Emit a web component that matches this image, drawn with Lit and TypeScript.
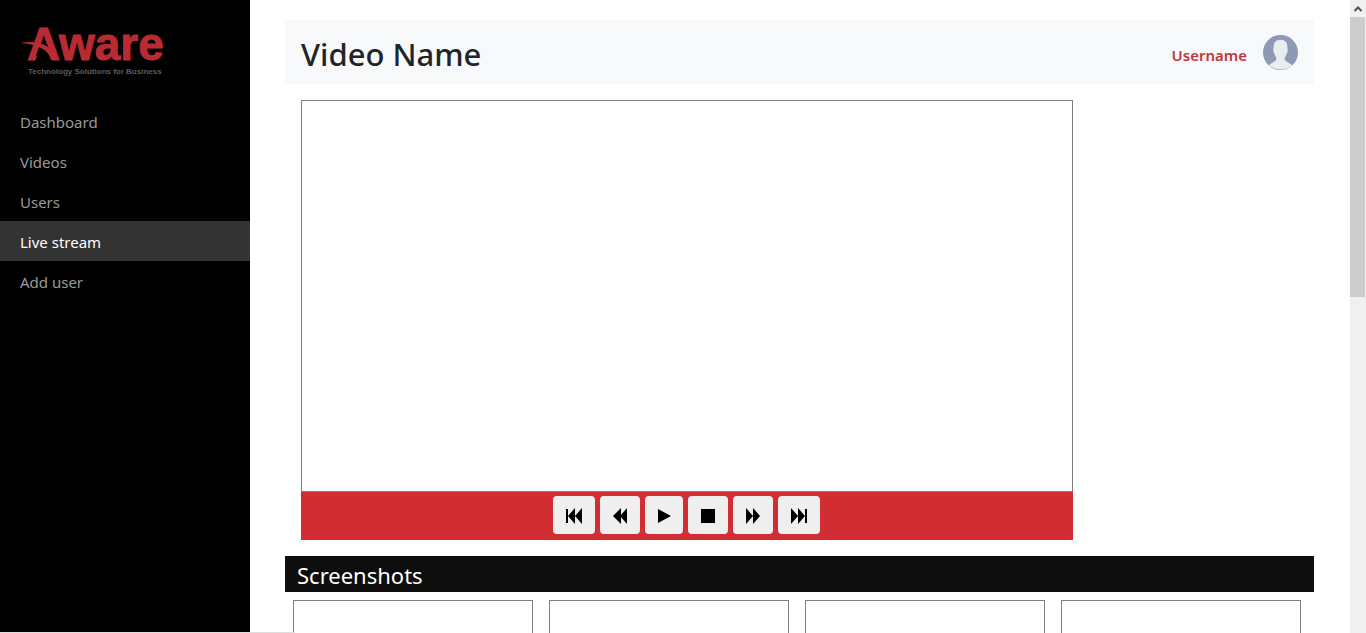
import { LitElement, html, css, svg } from "lit";
import { customElement, state } from "lit/decorators.js";
import { classMap } from "lit/directives/class-map.js";

const NAV = ["Dashboard", "Videos", "Users", "Live stream", "Add user"];

const CONTROLS = [
  { label: "Previous", size: "wide", icon: svg`<path d="M1 2h2v14H1zM3 9l7-8v16zM10 9l7-8v16z"/>` },
  { label: "Rewind", size: "mid", icon: svg`<path d="M2 9l8-8v16zM9 9l7-8v16z"/>` },
  { label: "Play", size: "slim", icon: svg`<path d="M3 2l13 7-13 7z"/>` },
  { label: "Stop", size: "mid", icon: svg`<path d="M2 2h14v14H2z"/>` },
  { label: "Fast forward", size: "mid", icon: svg`<path d="M2 1l7 8-7 8zM9 1l7 8-7 8z"/>` },
  { label: "Next", size: "wide", icon: svg`<path d="M1 1l7 8-7 8zM8 1l7 8-7 8zM15 2h2v14h-2z"/>` },
];

@customElement("side-bar")
export class SideBar extends LitElement {
  @state() private active = "Live stream";

  static styles = css`
    :host { display: block; flex: none; width: 250px; background: #000; }
    .brand { display: block; height: 101px; }
    .logo { display: block; width: 190px; height: 90px; }
    .name { font-family: "Liberation Sans", Arial, sans-serif; font-weight: 700; font-size: 46px; fill: #b92b33; stroke: #b92b33; stroke-width: 1; }
    .tag { font-family: "Liberation Sans", Arial, sans-serif; font-size: 8px; font-weight: 700; fill: #5c5c5c; }
    .item {
      display: block; box-sizing: border-box; padding: 2px 20px 0; line-height: 38px; height: 40px;
      font-size: 15px; color: #999; text-decoration: none;
    }
    .on { background: #333; color: #fff; }
  `;

  render() {
    return html`
      <a class="brand" href="#" aria-label="Aware home">
        <svg class="logo" viewBox="0 0 190 90">
          <text class="name" x="27" y="60">A</text>
          <text class="name" x="59" y="60">ware</text>
          <path d="M40 44H47L51 56H36z" fill="#000"/>
          <path d="M20 43C36 40 53 44 57 60H51C49 50 38 44 20 43z" fill="#b92b33"/>
          <text class="tag" x="28" y="74">Technology Solutions for Business</text>
        </svg>
      </a>
      <nav>
        ${NAV.map((n) => html`<a href="#"
          class=${classMap({ item: true, on: n === this.active })}
          @click=${() => (this.active = n)}>${n}</a>`)}
      </nav>
    `;
  }
}

@customElement("video-player")
export class VideoPlayer extends LitElement {
  static styles = css`
    :host { display: block; width: 75%; margin: 16px 0 16px 16px; }
    .screen { box-sizing: border-box; height: 392px; border: 1px solid #808080; }
    .controls {
      display: flex; justify-content: center; align-items: flex-start; gap: 5px;
      box-sizing: border-box; height: 48px; padding-top: 4px; background: #d32d34;
    }
    .btn {
      display: flex; align-items: center; justify-content: center;
      height: 38px; padding: 2px 0 0; border: 0; border-radius: 4px; background: #efefef;
    }
    .wide { width: 42px; }
    .mid { width: 40px; }
    .slim { width: 38px; }
    .glyph { width: 18px; height: 18px; }
  `;

  render() {
    return html`
      <div class="screen"></div>
      <div class="controls">
        ${CONTROLS.map((c) => html`<button class="btn ${c.size}" aria-label=${c.label}>
          <svg class="glyph" viewBox="0 0 18 18">${c.icon}</svg>
        </button>`)}
      </div>
    `;
  }
}

@customElement("app-root")
export class AppRoot extends LitElement {
  static styles = css`
    :host {
      display: flex; position: relative; height: 100vh; overflow: hidden; background: #fff;
      font-family: "Segoe UI", "Noto Sans", sans-serif; color: #212529;
    }
    .main { flex: 1; min-width: 0; padding: 20px 36px 0 35px; }
    .head {
      display: flex; align-items: center; gap: 16px;
      height: 64px; padding: 0 16px; background: #f8f9fb;
    }
    .title { margin: 0 auto 0 0; padding-top: 4px; font-size: 31px; font-weight: 500; line-height: 40px; }
    .user { font-size: 15px; font-weight: 600; line-height: 24px; padding-top: 6px; color: #c3353c; text-decoration: none; }
    .avatar { width: 35px; height: 35px; }
    .bar {
      margin: 0; padding: 0 12px; height: 36px; line-height: 38px;
      background: #0e0e0e; color: #fff; font-size: 22px; font-weight: 400;
    }
    .shots { display: flex; flex-wrap: wrap; gap: 16px; padding: 8px; }
    .shot { box-sizing: border-box; width: 240px; height: 160px; border: 1px solid #808080; }
    .scroll { flex: none; width: 16px; background: #f0f0f0; }
    .arrow { display: block; width: 16px; height: 17px; }
    .thumb { height: 280px; margin-right: 1px; background: #cdcdcd; }
    .status { position: absolute; left: 0; bottom: 0; width: 295px; height: 1px; background: #dedede; }
  `;

  render() {
    return html`
      <side-bar></side-bar>
      <main class="main">
        <header class="head">
          <h1 class="title">Video Name</h1>
          <a class="user" href="#">Username</a>
          <svg class="avatar" viewBox="0 0 36 36" aria-hidden="true">
            <circle cx="18" cy="18" r="18" fill="#8e99b5"/>
            <path d="M18 5c5 0 7 3 7 7 0 2 1 3 0 6-1 1-1 3-2 4-1 2-1 4 1 5l6 4a18 18 0 0 1-24 0l6-4c2-1 2-3 1-5-1-1-1-3-2-4-1-3 0-4 0-6 0-4 2-7 7-7z" fill="#e8eeef"/>
          </svg>
        </header>
        <video-player></video-player>
        <h2 class="bar">Screenshots</h2>
        <section class="shots">
          ${[1, 2, 3, 4].map(() => html`<div class="shot"></div>`)}
        </section>
      </main>
      <div class="scroll" aria-hidden="true">
        <svg class="arrow" viewBox="0 0 16 17"><path d="M4.500 11L8 7.500l3.500 3.500" fill="none" stroke="#505050" stroke-width="2"/></svg>
        <div class="thumb"></div>
      </div>
      <div class="status"></div>
    `;
  }
}
